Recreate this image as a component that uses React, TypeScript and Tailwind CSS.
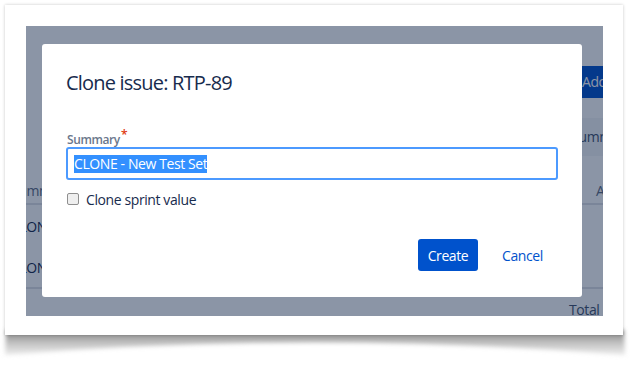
export default function App() {
  return (
    <div className="relative w-[637px] h-[365px] bg-white overflow-hidden font-['Open_Sans','Noto_Sans',sans-serif] tracking-[-0.025em]">
      <PageCurl />
      <div className="relative ml-[5px] mt-[5px] w-[618px] h-[330px] bg-white p-[21px] shadow-[0_0_3px_rgba(0,0,0,0.22)]">
        <div className="relative w-[577px] h-[290px] overflow-hidden bg-white">
          <BackgroundPage />
          <div className="absolute inset-0 bg-[rgba(9,30,66,0.47)]" />
          <CloneDialog />
        </div>
      </div>
    </div>
  )
}

function PageCurl() {
  return (
    <svg className="absolute left-0 top-0" width="637" height="365" viewBox="0 0 637 365">
      <defs>
        <linearGradient id="curl" x1="0" y1="0" x2="0" y2="1">
          <stop offset="0" stopColor="#7c7c7c" />
          <stop offset="1" stopColor="#d6d6d6" stopOpacity="0.5" />
        </linearGradient>
        <filter id="blur" x="-5%" y="-50%" width="110%" height="200%">
          <feGaussianBlur stdDeviation="2" />
        </filter>
      </defs>
      <path d="M6 330 L624 330 L625 355 Q315 330 5 355 Z" fill="url(#curl)" filter="url(#blur)" />
    </svg>
  )
}

function BackgroundPage() {
  return (
    <div className="flex flex-col text-[14px] text-[#172b4d]">
      <div className="pt-[40px] h-[72px]">
        <div className="ml-[546px] w-[100px] h-[32px] px-[10px] rounded-[3px] bg-[#0052cc] text-white leading-[32px] whitespace-nowrap">
          Add issues
        </div>
      </div>
      <div className="mt-[20px] h-[38px] ml-[500px] w-[120px] bg-[#f4f5f7] rounded-[3px] pl-[33px] leading-[38px] whitespace-nowrap text-[#42526e]">
        Columns
      </div>
      <div className="ml-[-15px] mt-[22px] w-[620px] flex flex-col">
        <div className="h-[27px] flex items-center border-b-2 border-[#dfe1e6] text-[#5e6c84] whitespace-nowrap">
          <div className="w-[585px] shrink-0">Summary</div>
          <div className="shrink-0">Assignee</div>
        </div>
        <div className="h-[42px] flex items-center whitespace-nowrap">
          <div className="w-[585px] shrink-0">CLONE - New Test Set</div>
        </div>
        <div className="h-[42px] flex items-center border-b-2 border-[#dfe1e6] whitespace-nowrap">
          <div className="w-[585px] shrink-0">CLONE - New Test Set</div>
        </div>
      </div>
      <div className="mt-[11px] pl-[543px] leading-[20px] whitespace-nowrap text-[#42526e]">Total</div>
    </div>
  )
}

function CloneDialog() {
  return (
    <div className="absolute left-[16px] top-[18px] w-[540px] h-[253px] bg-white rounded-[3px] px-[24px] pt-[24px] flex flex-col">
      <h2 className="text-[20px] leading-[30px] font-normal tracking-[-0.04em] text-[#172b4d]">Clone issue: RTP-89</h2>

      <label className="mt-[35px] ml-[1px] text-[12px] leading-[14px] font-semibold text-[#6b778c]">
        Summary
        <span className="relative top-[-5px] text-[#de350b] ml-[1px]">*</span>
      </label>
      <div className="h-[33px] w-[492px] border-2 border-[#4c9aff] rounded-[3px] px-[6px] flex items-center">
        <span className="leading-[18px] text-[14px] bg-[#3390ff] text-white whitespace-nowrap">
          CLONE - New Test Set
        </span>
      </div>

      <div className="mt-[9px] h-[20px] flex items-center gap-[7px] pl-[1px]">
        <span className="w-[12px] h-[12px] rounded-[2px] border border-[#8f8f8f] bg-[#efefef]" />
        <span className="text-[14px] text-[#172b4d]">Clone sprint value</span>
      </div>

      <div className="mt-[30px] flex justify-end gap-[14px] pr-[5px]">
        <button className="w-[60px] h-[32px] rounded-[3px] bg-[#0052cc] text-white text-[14px]">Create</button>
        <button className="w-[61px] h-[32px] text-[#0052cc] text-[14px]">Cancel</button>
      </div>
    </div>
  )
}
